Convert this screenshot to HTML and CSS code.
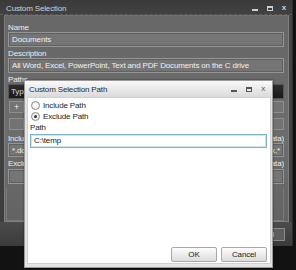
FILE: index.html
```html
<!DOCTYPE html>
<html>
<head>
<meta charset="utf-8">
<link rel="stylesheet" href="styles.css">
</head>
<body>
<div class="win">
  <div class="win-title">
    <span class="win-caption">Custom Selection</span>
    <div class="ctrls">
      <span class="c-min"></span>
      <span class="c-max"></span>
      <span class="c-close">x</span>
    </div>
  </div>
  <div class="win-body">
    <div class="lbl">Name</div>
    <div class="tb">Documents</div>
    <div class="lbl">Description</div>
    <div class="tb">All Word, Excel, PowerPoint, Text and PDF Documents on the C drive</div>
    <div class="lbl">Paths</div>
    <div class="grid">
      <div class="grid-head"><span>Type</span></div>
      <div class="grid-row"><span class="gbtn">+</span><span class="gcell"></span><span class="gbtn"></span></div>
      <div class="grid-row"><span class="gbtn"></span><span class="gcell"></span><span class="gbtn"></span></div>
    </div>
    <div class="lbl split"><span>Include Files</span><span>(e.g. *.doc for data)</span></div>
    <div class="tb split"><span>*.do</span><span>x,*</span></div>
    <div class="lbl split"><span>Exclude Files</span><span>(e.g. *.tmp for data)</span></div>
    <div class="tb tb-tall"></div>
    <div class="group"></div>
  </div>
  <div class="win-foot">
    <span class="fbtn">OK</span>
    <span class="fbtn">Cancel</span>
  </div>
</div>

<div class="dlg">
  <div class="dlg-title">
    <span>Custom Selection Path</span>
    <div class="dctrls">
      <span class="d-min"></span>
      <span class="d-max"></span>
      <span class="d-close">x</span>
    </div>
  </div>
  <div class="dlg-body">
    <div class="dlg-main">
      <label class="radio"><span class="rc"></span>Include Path</label>
      <label class="radio"><span class="rc on"></span>Exclude Path</label>
      <div class="dlbl">Path</div>
      <div class="dtb">C:\temp</div>
    </div>
    <div class="dlg-btns">
      <span class="dbtn">OK</span>
      <span class="dbtn">Cancel</span>
    </div>
  </div>
</div>
</body>
</html>
```

FILE: styles.css
```css
* { box-sizing: border-box; }
html, body {
  margin: 0;
  padding: 0;
  width: 296px;
  height: 270px;
  overflow: hidden;
  background: #121212;
  font-family: "Liberation Sans", Arial, sans-serif;
  font-size: 8px;
  letter-spacing: -0.15px;
}
body { position: relative; }

.win {
  width: 293px;
  height: 246px;
  background: linear-gradient(#3a3a3a, #454545 20px, #3c3c3c);
  border-right: 1px solid #2c2c2c;
  display: flex;
  flex-direction: column;
}
.win-title {
  height: 15px;
  display: flex;
  align-items: center;
  justify-content: space-between;
  padding: 2px 6px 0 6px;
  color: #d2d2d2;
  border-bottom: 1px dashed #5c5c5c;
}
.ctrls { display: flex; align-items: center; gap: 9px; }
.c-min { width: 6px; height: 2px; background: #cfcfcf; margin-top: 4px; }
.c-max { width: 6px; height: 5px; border: 1px solid #cfcfcf; border-top-width: 2px; }
.c-close { color: #cfcfcf; font-size: 8px; font-weight: bold; line-height: 8px; }

.win-body {
  margin: 0 3px 0 4px;
  height: 207px;
  background: linear-gradient(#676767, #6d6d6d 60%, #636363);
  border: 1px solid #7e7e7e;
  border-top-color: #717171;
  padding: 6px 4px 0 3px;
  display: flex;
  flex-direction: column;
}
.lbl {
  color: #ececec;
  height: 10px;
  line-height: 11px;
  white-space: nowrap;
  overflow: hidden;
}
.split { display: flex; justify-content: space-between; }
.tb {
  height: 15px;
  border: 1px solid #959595;
  background: #757575;
  box-shadow: inset 0 0 0 1px #616161;
  color: #f0f0f0;
  padding: 0 3px;
  line-height: 13px;
  white-space: nowrap;
  overflow: hidden;
  margin-bottom: 1px;
}
.grid { display: flex; flex-direction: column; }
.grid-head {
  height: 15px;
  background: linear-gradient(#2c2c2c, #1a1a1a);
  border: 1px solid #555;
  color: #d8d8d8;
  display: flex;
  padding: 0 2px;
  line-height: 13px;
}
.grid-row {
  height: 17px;
  display: flex;
  align-items: center;
  gap: 2px;
  padding: 0 0 0 1px;
}
.gbtn {
  width: 15px;
  height: 12px;
  border: 1px solid #8e8e8e;
  background: #737373;
  color: #eee;
  text-align: center;
  line-height: 10px;
  font-size: 9px;
}
.gcell { flex: 1; height: 12px; }
.tb-tall { height: 15px; margin-top: 1px; }
.group {
  margin: 3px 0 0 -2px;
  height: 33px;
  border: 1px solid #7a7a7a;
  border-top: none;
}
.win-foot {
  flex: 1;
  display: flex;
  justify-content: flex-end;
  align-items: center;
  gap: 4px;
  padding: 0 7px 0 0;
  background: linear-gradient(#4c4c4c, #3a3a3a);
}
.fbtn {
  width: 46px;
  height: 13px;
  border: 1px solid #8a8a8a;
  background: #5e5e5e;
  color: #e6e6e6;
  text-align: center;
  line-height: 11px;
}

/* dialog over the window */
.dlg {
  position: absolute;
  left: 24px;
  top: 80px;
  width: 249px;
  height: 188px;
  border: 1px solid #9a9a9a;
  background: #e4e4e4;
  box-shadow: 0 0 2px rgba(0,0,0,0.5);
  display: flex;
  flex-direction: column;
}
.dlg-title {
  height: 16px;
  display: flex;
  align-items: center;
  justify-content: space-between;
  padding: 0 7px 0 4px;
  background: linear-gradient(#fafafa, #e6e6e6 60%, #dadada);
  color: #2a2a2a;
}
.dctrls { display: flex; align-items: center; gap: 9px; }
.d-min { width: 6px; height: 2px; background: #555; margin-top: 4px; }
.d-max { width: 6px; height: 5px; border: 1px solid #555; border-top-width: 2px; }
.d-close { color: #555; font-size: 8px; line-height: 8px; }
.dlg-body {
  flex: 1;
  margin: 0 1px 3px 2px;
  background: #fff;
  border: 1px solid #d0d0d0;
  display: flex;
  flex-direction: column;
  justify-content: space-between;
  padding: 2px 3px 0 2px;
}
.dlg-main { display: flex; flex-direction: column; }
.radio {
  display: flex;
  align-items: center;
  gap: 3px;
  height: 11px;
  color: #222;
  padding-left: 1px;
}
.rc {
  width: 9px;
  height: 9px;
  border-radius: 50%;
  border: 1px solid #8a8a8a;
  background: radial-gradient(#ffffff, #e6e6e6);
  position: relative;
}
.rc.on::after {
  content: "";
  position: absolute;
  left: 2px;
  top: 2px;
  width: 3px;
  height: 3px;
  border-radius: 50%;
  background: #333;
}
.dlbl { color: #222; height: 10px; line-height: 10px; margin-top: 1px; }
.dtb {
  height: 14px;
  border: 1px solid #76b6c6;
  box-shadow: inset 0 0 0 1px #cfe6ec;
  color: #222;
  line-height: 12px;
  padding: 0 3px;
  margin-top: 1px;
}
.dlg-btns {
  display: flex;
  justify-content: flex-end;
  gap: 4px;
  padding: 0 0 1px 0;
}
.dbtn {
  width: 46px;
  height: 15px;
  border: 1px solid #a8a8a8;
  border-radius: 2px;
  background: linear-gradient(#fdfdfd, #ececec 50%, #dcdcdc);
  color: #222;
  text-align: center;
  line-height: 13px;
}
```
